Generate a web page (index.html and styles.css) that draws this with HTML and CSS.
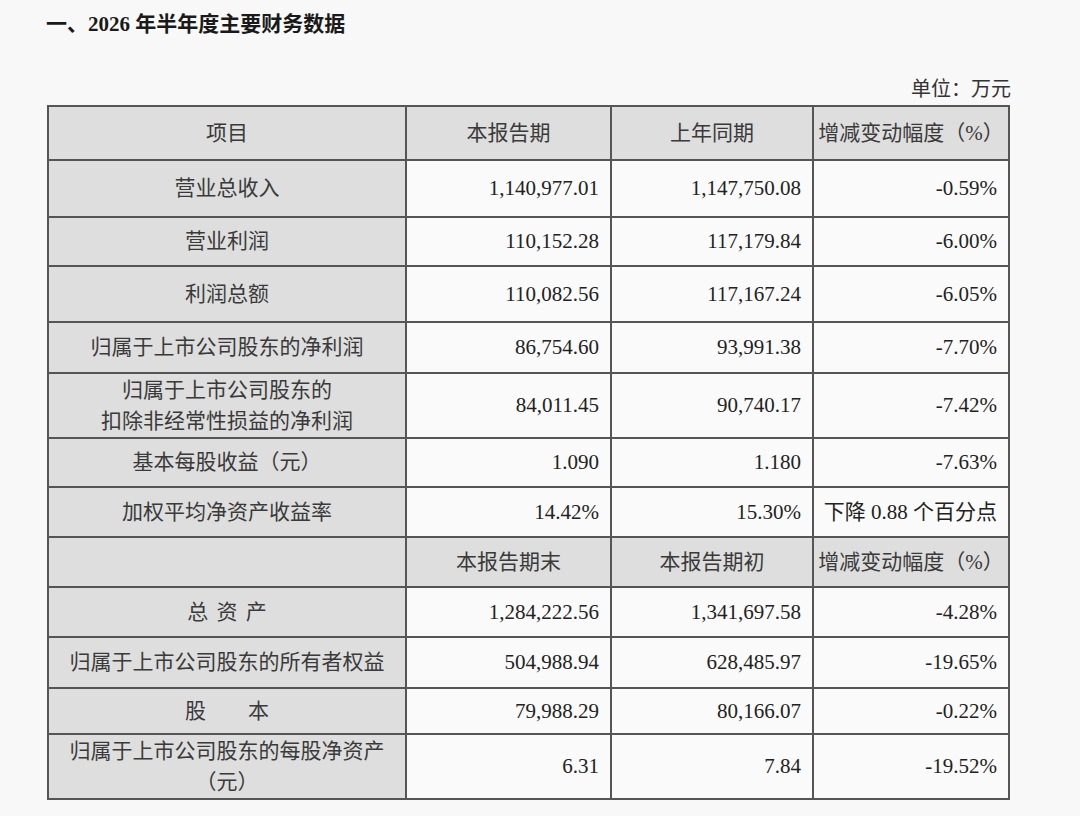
FILE: index.html
```html
<!DOCTYPE html>
<html lang="zh-CN">
<head>
<meta charset="utf-8">
<title>2026 年半年度主要财务数据</title>
<link rel="stylesheet" href="styles.css">
</head>
<body>
<div class="page">
  <h1 class="title">一、<b class="num">2026</b> 年半年度主要财务数据</h1>
  <div class="unit">单位：万元</div>
  <div class="fin-table">
    <div class="c head">项目</div>
    <div class="c head">本报告期</div>
    <div class="c head">上年同期</div>
    <div class="c head">增减变动幅度（%）</div>

    <div class="c label">营业总收入</div>
    <div class="c val">1,140,977.01</div>
    <div class="c val">1,147,750.08</div>
    <div class="c val">-0.59%</div>

    <div class="c label">营业利润</div>
    <div class="c val">110,152.28</div>
    <div class="c val">117,179.84</div>
    <div class="c val">-6.00%</div>

    <div class="c label">利润总额</div>
    <div class="c val">110,082.56</div>
    <div class="c val">117,167.24</div>
    <div class="c val">-6.05%</div>

    <div class="c label">归属于上市公司股东的净利润</div>
    <div class="c val">86,754.60</div>
    <div class="c val">93,991.38</div>
    <div class="c val">-7.70%</div>

    <div class="c label multi">归属于上市公司股东的<br>扣除非经常性损益的净利润</div>
    <div class="c val">84,011.45</div>
    <div class="c val">90,740.17</div>
    <div class="c val">-7.42%</div>

    <div class="c label">基本每股收益（元）</div>
    <div class="c val">1.090</div>
    <div class="c val">1.180</div>
    <div class="c val">-7.63%</div>

    <div class="c label">加权平均净资产收益率</div>
    <div class="c val">14.42%</div>
    <div class="c val">15.30%</div>
    <div class="c val">下降 0.88 个百分点</div>

    <div class="c head"></div>
    <div class="c head">本报告期末</div>
    <div class="c head">本报告期初</div>
    <div class="c head">增减变动幅度（%）</div>

    <div class="c label spaced">总 资 产</div>
    <div class="c val">1,284,222.56</div>
    <div class="c val">1,341,697.58</div>
    <div class="c val">-4.28%</div>

    <div class="c label">归属于上市公司股东的所有者权益</div>
    <div class="c val">504,988.94</div>
    <div class="c val">628,485.97</div>
    <div class="c val">-19.65%</div>

    <div class="c label">股　　本</div>
    <div class="c val">79,988.29</div>
    <div class="c val">80,166.07</div>
    <div class="c val">-0.22%</div>

    <div class="c label multi">归属于上市公司股东的每股净资产<br>（元）</div>
    <div class="c val">6.31</div>
    <div class="c val">7.84</div>
    <div class="c val">-19.52%</div>
  </div>
</div>
</body>
</html>
```
FILE: styles.css
```css
html, body {
  margin: 0;
  padding: 0;
  background: #f8f8f8;
}

body {
  font-family: "Liberation Serif", "Noto Sans CJK SC", serif;
  color: #333;
}

.page {
  width: 964px;
  padding-left: 47px;
}

.title {
  margin: 0;
  padding-top: 10px;
  padding-left: 0;
  margin-left: -1px;
  font-size: 21px;
  line-height: 28px;
  font-weight: 700;
  color: #1a1a1a;
}

.title .num {
  font-weight: 700;
}

.unit {
  margin-top: 39px;
  text-align: right;
  font-size: 20px;
  line-height: 24px;
  color: #333;
}

.fin-table {
  margin-top: 4px;
  display: grid;
  grid-template-columns: 358px 205px 202px 196px;
  grid-template-rows: 54px 57px 49px 56px 51px 65px 49px 50px 50px 50px 51px 46px 65px;
  width: fit-content;
  border-top: 2px solid #555;
  border-left: 2px solid #555;
}

.c {
  box-sizing: border-box;
  border-right: 2px solid #555;
  border-bottom: 2px solid #555;
  display: flex;
  align-items: center;
  font-size: 21px;
  line-height: 31px;
  background: #fafafa;
  overflow: hidden;
  white-space: nowrap;
}

.head {
  background: #dedede;
  justify-content: center;
  color: #3a3a3a;
}

.label {
  background: #dedede;
  justify-content: center;
  text-align: center;
  color: #3a3a3a;
}

.label.spaced {
  word-spacing: 3px;
}

.val {
  justify-content: flex-end;
  padding-right: 11px;
  color: #222;
}
```
